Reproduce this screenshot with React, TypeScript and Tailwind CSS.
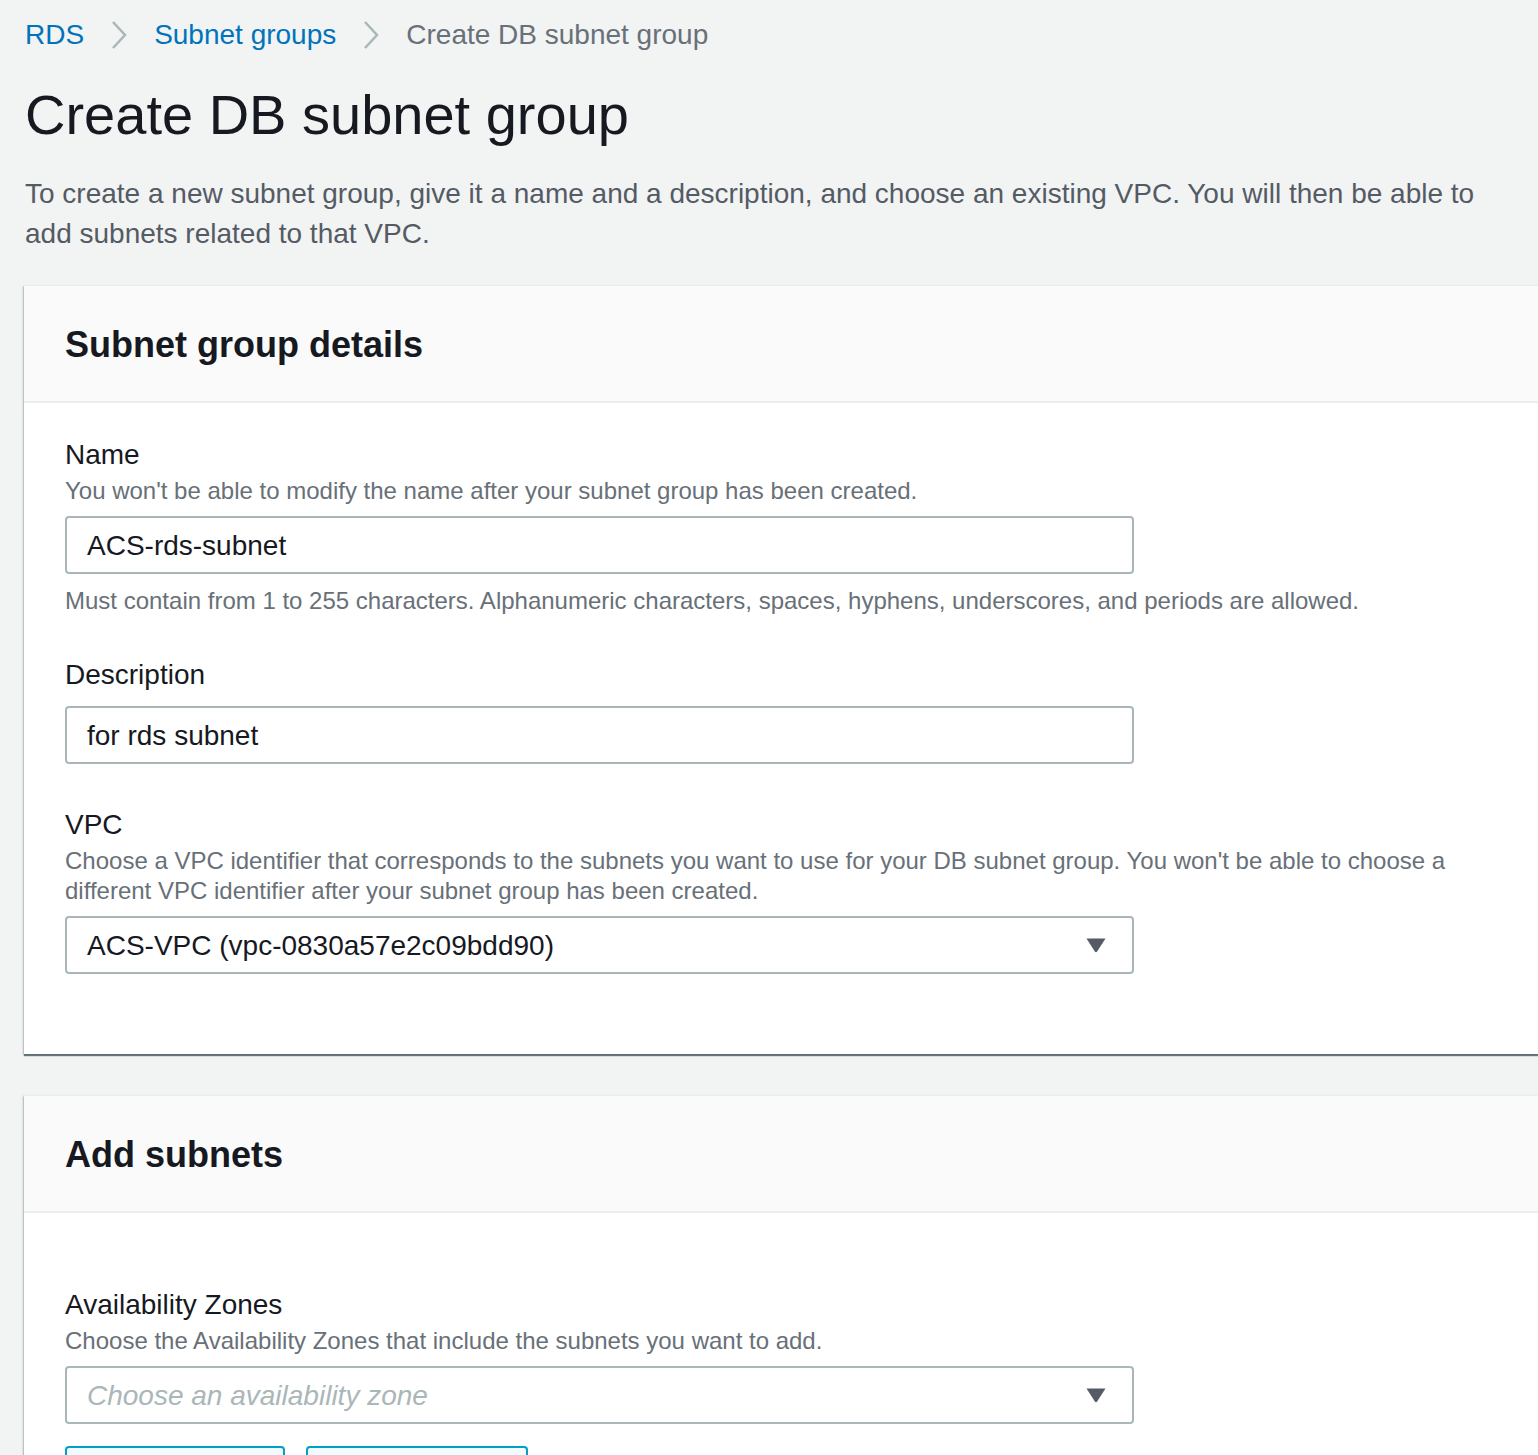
import { ReactNode } from 'react'

const font = { fontFamily: '"Liberation Sans", Arial, sans-serif' }

function Chevron() {
  return (
    <svg width="16" height="30" viewBox="0 0 16 30" className="mx-[27px]">
      <polyline points="2,2 14,15 2,28" fill="none" stroke="#aab7b8" strokeWidth="2.5" />
    </svg>
  )
}

function Caret() {
  return (
    <svg width="22" height="16" viewBox="0 0 22 16" className="shrink-0">
      <path d="M1.5 1.5 H20.5 L12.3 14.3 Q11 16 9.7 14.3 Z" fill="#545b64" />
    </svg>
  )
}

function Field({
  label,
  hint,
  children,
  className = '',
}: {
  label: string
  hint?: ReactNode
  children: ReactNode
  className?: string
}) {
  return (
    <div className={className}>
      <div className="text-[28px] leading-[36px] text-[#16191f]">{label}</div>
      {hint && <div className="mt-[3px] text-[24px] leading-[30px] text-[#687078]">{hint}</div>}
      <div className={hint ? 'mt-[10px]' : 'mt-[13px]'}>{children}</div>
    </div>
  )
}

function TextBox({ value }: { value: string }) {
  return (
    <div className="w-[1069px] h-[58px] border-2 border-[#aab7b8] rounded-[4px] bg-white flex items-center pl-[20px] pt-[2px] text-[28px] text-[#16191f]">
      {value}
    </div>
  )
}

function SelectBox({ value, placeholder }: { value?: string; placeholder?: string }) {
  return (
    <div className="w-[1069px] h-[58px] border-2 border-[#aab7b8] rounded-[4px] bg-white flex items-center justify-between pl-[20px] pr-[25px] text-[28px]">
      {value ? (
        <span className="text-[#16191f] pt-[2px]">{value}</span>
      ) : (
        <span className="italic text-[#aab7b8] pt-[2px]">{placeholder}</span>
      )}
      <Caret />
    </div>
  )
}

function Card({ title, children, className = '' }: { title: string; children: ReactNode; className?: string }) {
  return (
    <div
      className={`bg-white shadow-[0_2px_1px_0_rgba(0,28,36,0.55),-1px_1px_2px_0_rgba(0,28,36,0.2)] ${className}`}
    >
      <div className="h-[118px] bg-[#fafafa] border-b-2 border-t border-[#eaeded] flex items-center pl-[41px] pt-[2px]">
        <h2 className="text-[36px] font-bold text-[#16191f] leading-[44px]">{title}</h2>
      </div>
      {children}
    </div>
  )
}

export default function App() {
  return (
    <div style={font} className="min-h-screen bg-[#f2f3f3] pl-[24px] overflow-hidden">
      <nav className="flex items-center h-[40px] mt-[15px] text-[28px] pl-[1px]">
        <span className="text-[#0073bb]">RDS</span>
        <Chevron />
        <span className="text-[#0073bb]">Subnet groups</span>
        <Chevron />
        <span className="text-[#687078]">Create DB subnet group</span>
      </nav>

      <h1 className="mt-[28px] text-[56px] leading-[64px] text-[#16191f] pl-[1px]">Create DB subnet group</h1>

      <p className="mt-[27px] text-[28px] leading-[40px] text-[#545b64] pl-[1px]">
        To create a new subnet group, give it a name and a description, and choose an existing VPC. You will then be able to
        <br />
        add subnets related to that VPC.
      </p>

      <Card title="Subnet group details" className="mt-[31px]">
        <div className="pl-[41px] pt-[34px] pb-[80px]">
          <Field label="Name" hint="You won't be able to modify the name after your subnet group has been created.">
            <TextBox value="ACS-rds-subnet" />
          </Field>
          <div className="mt-[12px] text-[24px] leading-[30px] text-[#687078]">
            Must contain from 1 to 255 characters. Alphanumeric characters, spaces, hyphens, underscores, and periods are allowed.
          </div>

          <Field label="Description" className="mt-[41px]">
            <TextBox value="for rds subnet" />
          </Field>

          <Field
            label="VPC"
            className="mt-[43px]"
            hint={
              <>
                Choose a VPC identifier that corresponds to the subnets you want to use for your DB subnet group. You won't be able to choose a
                <br />
                different VPC identifier after your subnet group has been created.
              </>
            }
          >
            <SelectBox value="ACS-VPC (vpc-0830a57e2c09bdd90)" />
          </Field>
        </div>
      </Card>

      <Card title="Add subnets" className="mt-[41px]">
        <div className="pl-[41px] pt-[74px] pb-[40px]">
          <Field label="Availability Zones" hint="Choose the Availability Zones that include the subnets you want to add.">
            <SelectBox placeholder="Choose an availability zone" />
          </Field>
          <div className="mt-[22px] flex gap-[21px]">
            <button className="w-[220px] h-[58px] rounded-[4px] border-2 border-[#00a1c9] bg-[#f1faff]"></button>
            <button className="w-[222px] h-[58px] rounded-[4px] border-2 border-[#00a1c9] bg-[#f1faff]"></button>
          </div>
        </div>
      </Card>
    </div>
  )
}
